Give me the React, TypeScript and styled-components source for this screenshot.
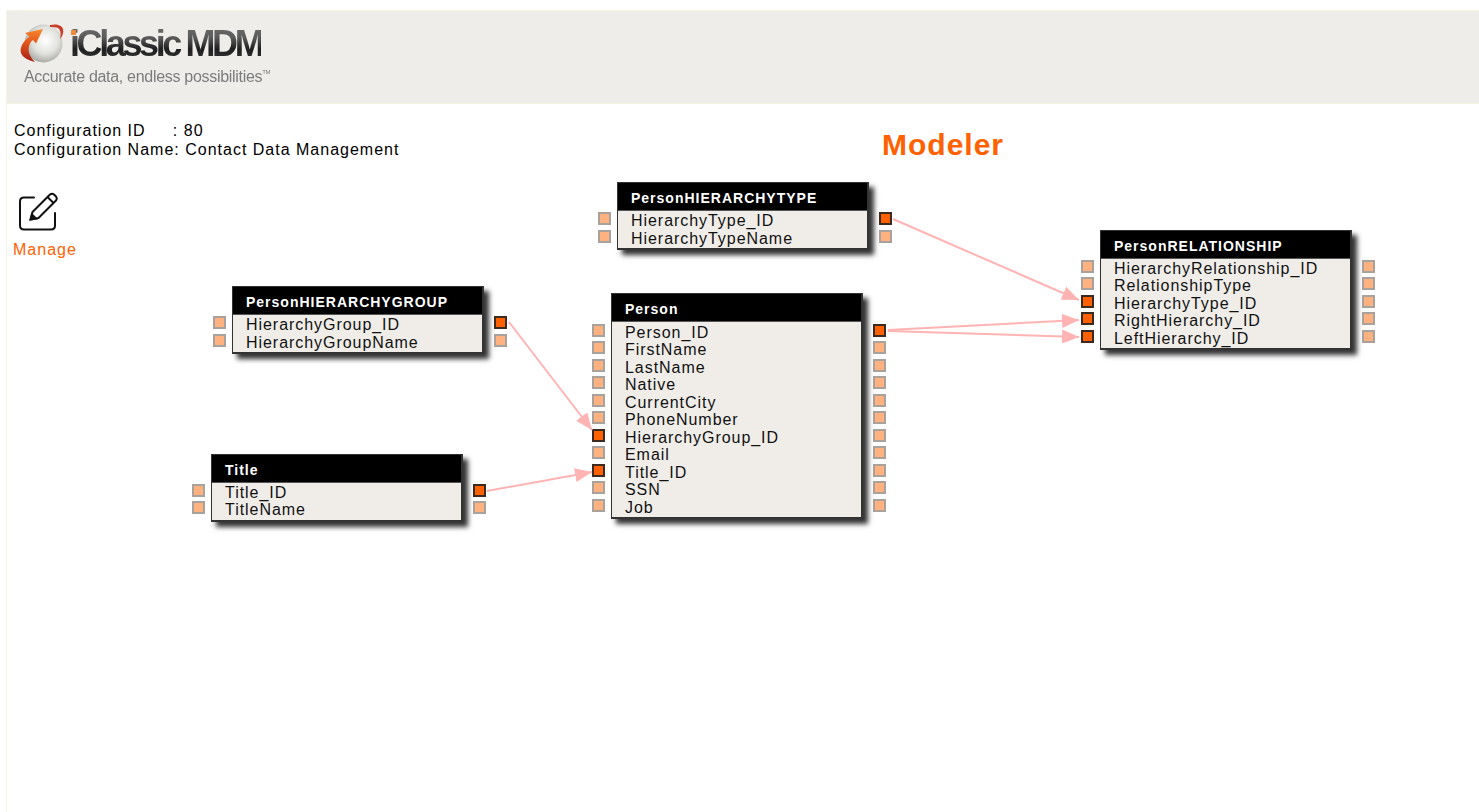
import React from 'react';
import styled, { createGlobalStyle } from 'styled-components';

const GlobalStyle = createGlobalStyle`
  html, body {
    margin: 0;
    padding: 0;
    background: #fff;
    font-family: "Liberation Sans", Arial, sans-serif;
  }
`;

const Page = styled.div`
  position: relative;
  height: 812px;
  padding: 10px 0 0 6px;
  box-sizing: border-box;
  overflow: hidden;
`;

const Shell = styled.div`
  height: 100%;
  display: flex;
  flex-direction: column;
  border-left: 1px solid #f5f5e0;
`;

const Header = styled.div`
  height: 94px;
  box-sizing: border-box;
  flex: none;
  background: #eeede9;
  border-top: 1px solid #f4f4e0;
  border-bottom: 1px solid #f4f4e0;
  padding: 13px 0 0 13px;
`;

const LogoRow = styled.div`
  display: flex;
  align-items: center;
  height: 40px;
  gap: 5px;
  filter: blur(0.35px);
`;

const LogoWrap = styled.div`
  position: relative;
`;

const LogoText = styled.span`
  display: block;
  font-size: 36px;
  line-height: 42px;
  font-weight: 700;
  letter-spacing: -3.4px;
  white-space: pre;
  color: transparent;
  background: linear-gradient(180deg, #707070 0%, #5a5a5a 35%, #1f1f1f 62%, #3c3c3c 100%);
  -webkit-background-clip: text;
  background-clip: text;
`;

const LogoDot = styled.span`
  position: absolute;
  left: 1px;
  top: 7px;
  width: 5px;
  height: 5px;
  background: #f08a3c;
`;

const Tagline = styled.div`
  margin: 2px 0 0 4px;
  font-size: 16px;
  line-height: 22px;
  letter-spacing: -0.3px;
  color: #7c7c7c;
  white-space: nowrap;
  filter: blur(0.3px);

  sup {
    font-size: 6px;
    line-height: 0;
    vertical-align: 8px;
  }
`;

const InfoRow = styled.div`
  display: flex;
  padding: 17px 0 0 7px;
  height: 70px;
  box-sizing: border-box;
  flex: none;
`;

const InfoBlock = styled.div`
  width: 868px;
  flex: none;
  font-size: 16px;
  line-height: 19px;
  letter-spacing: 1px;
  color: #000;
  white-space: pre;
`;

const Title = styled.h1`
  margin: 8px 0 0;
  font-size: 30px;
  line-height: 32px;
  font-weight: 700;
  letter-spacing: 1px;
  color: #ff6100;
`;

const ManageLink = styled.div`
  display: flex;
  flex-direction: column;
  align-items: flex-start;
  padding: 18px 0 0 6px;
  gap: 8px;

  svg {
    margin-left: 6px;
  }
`;

const ManageLabel = styled.span`
  font-size: 16px;
  line-height: 20px;
  letter-spacing: 1px;
  color: #ff6100;
`;

const Canvas = styled.div`
  position: absolute;
  inset: 0;
`;

const Arrows = styled.svg`
  position: absolute;
  left: 0;
  top: 0;
`;

const Node = styled.div<{ $x: number; $y: number }>`
  position: absolute;
  left: ${p => p.$x}px;
  top: ${p => p.$y}px;
  display: flex;
`;

const PortColumn = styled.div<{ $side: 'left' | 'right' }>`
  display: flex;
  flex-direction: column;
  padding-top: 28px;
  margin-left: ${p => (p.$side === 'right' ? '10px' : '0')};
  margin-right: ${p => (p.$side === 'left' ? '6px' : '0')};
`;

const PortCell = styled.div`
  height: 17.5px;
  display: flex;
  align-items: center;
`;

const Port = styled.span<{ $active?: boolean }>`
  display: block;
  width: 13px;
  height: 13px;
  box-sizing: border-box;
  background: ${p => (p.$active ? '#ff6100' : '#ffb27f')};
  border: 2px solid ${p => (p.$active ? '#3a2a20' : '#a9a29c')};
`;

const Table = styled.div`
  width: 252px;
  box-sizing: border-box;
  background: #f0ede9;
  border: 1px solid #333;
  border-bottom-width: 2px;
  border-right-width: 2px;
  box-shadow: 5px 5px 5px #333;
`;

const TableTitle = styled.div`
  height: 27px;
  box-sizing: border-box;
  padding: 0 0 0 13px;
  background: #000;
  color: #fff;
  font-size: 14px;
  line-height: 30px;
  font-weight: 700;
  letter-spacing: 1px;
  white-space: nowrap;
`;

const Fields = styled.div`
  padding: 1.4px 0 1px 13px;
  border-top: 1px solid #555;
`;

const Field = styled.div`
  height: 17.5px;
  font-size: 16px;
  line-height: 18px;
  letter-spacing: 0.95px;
  color: #111;
  white-space: nowrap;
`;

type TableDef = {
  name: string;
  x: number;
  y: number;
  fields: string[];
  activeLeft?: number[];
  activeRight?: number[];
};

const tables: TableDef[] = [
  { name: 'PersonHIERARCHYTYPE', x: 598, y: 182, fields: ['HierarchyType_ID', 'HierarchyTypeName'], activeRight: [0] },
  {
    name: 'PersonRELATIONSHIP',
    x: 1081,
    y: 229.6,
    fields: ['HierarchyRelationship_ID', 'RelationshipType', 'HierarchyType_ID', 'RightHierarchy_ID', 'LeftHierarchy_ID'],
    activeLeft: [2, 3, 4],
  },
  { name: 'PersonHIERARCHYGROUP', x: 213, y: 286, fields: ['HierarchyGroup_ID', 'HierarchyGroupName'], activeRight: [0] },
  {
    name: 'Person',
    x: 592,
    y: 293.4,
    fields: ['Person_ID', 'FirstName', 'LastName', 'Native', 'CurrentCity', 'PhoneNumber', 'HierarchyGroup_ID', 'Email', 'Title_ID', 'SSN', 'Job'],
    activeLeft: [6, 8],
    activeRight: [0],
  },
  { name: 'Title', x: 192, y: 453.6, fields: ['Title_ID', 'TitleName'], activeRight: [0] },
];

const links = [
  { x1: 893, y1: 219, x2: 1079, y2: 300 },
  { x1: 888, y1: 330, x2: 1079, y2: 320 },
  { x1: 888, y1: 331, x2: 1079, y2: 337 },
  { x1: 509, y1: 322, x2: 592, y2: 430 },
  { x1: 487, y1: 491, x2: 592, y2: 472 },
];

const LogoMark = () => (
  <svg width="45" height="40" viewBox="0 0 45 40">
    <defs>
      <radialGradient id="globe" cx="0.55" cy="0.42" r="0.62">
        <stop offset="0" stopColor="#ffffff" />
        <stop offset="0.55" stopColor="#e2e2de" />
        <stop offset="1" stopColor="#a2a29e" />
      </radialGradient>
      <linearGradient id="swoosh" x1="0.5" y1="1" x2="0.6" y2="0">
        <stop offset="0" stopColor="#a61f14" />
        <stop offset="0.55" stopColor="#e2551b" />
        <stop offset="1" stopColor="#f7862a" />
      </linearGradient>
    </defs>
    <circle cx="23.5" cy="19.5" r="19" fill="url(#globe)" />
    <path d="M30 1 C36 -0.5 42 1 43 5 C44 9 42 13 40 15 C41 11 41 6 38 4 C36 3 33 3 30 3 Z" fill="#c8402a" />
    <path d="M23 5 L5 9 L9.5 12.5 C3 17 -0.5 24 1 29 C2.5 33 8 36.5 15 38 C10 33 7.5 28 9 22 C10 19 11 17 13 16 L16 19.5 Z" fill="url(#swoosh)" />
  </svg>
);

const ManageIcon = () => (
  <svg width="40" height="40" viewBox="0 0 40 40" fill="none" stroke="#111" strokeWidth="2">
    <path d="M15 5.5 H5 Q1 5.5 1 9.5 V33.5 Q1 37.5 5 37.5 H32 Q36 37.5 36 33.5 V21" strokeLinecap="round" />
    <path d="M11.5 27.5 L13.5 20 L31 2.5 Q33 1 35 2.5 L37 4.5 Q38.5 6.5 37 8.5 L19.5 26 Z" strokeLinejoin="round" />
    <path d="M28.5 5 L34.5 11" />
    <path d="M11.5 27.5 L13 22.5 L17 26.5 Z" fill="#111" />
  </svg>
);

const App = () => (
  <Page>
    <GlobalStyle />
    <Shell>
      <Header>
        <LogoRow>
          <LogoMark />
          <LogoWrap>
            <LogoText>iClassic MDM</LogoText>
            <LogoDot />
          </LogoWrap>
        </LogoRow>
        <Tagline>
          Accurate data, endless possibilities<sup>TM</sup>
        </Tagline>
      </Header>
      <InfoRow>
        <InfoBlock>
          {'Configuration ID     : 80\nConfiguration Name: Contact Data Management'}
        </InfoBlock>
        <Title>Modeler</Title>
      </InfoRow>
      <ManageLink>
        <ManageIcon />
        <ManageLabel>Manage</ManageLabel>
      </ManageLink>
    </Shell>
    <Canvas>
      {tables.map(t => (
        <Node key={t.name} $x={t.x} $y={t.y}>
          <PortColumn $side="left">
            {t.fields.map((f, i) => (
              <PortCell key={f}>
                <Port $active={t.activeLeft?.includes(i)} />
              </PortCell>
            ))}
          </PortColumn>
          <Table>
            <TableTitle>{t.name}</TableTitle>
            <Fields>
              {t.fields.map(f => (
                <Field key={f}>{f}</Field>
              ))}
            </Fields>
          </Table>
          <PortColumn $side="right">
            {t.fields.map((f, i) => (
              <PortCell key={f}>
                <Port $active={t.activeRight?.includes(i)} />
              </PortCell>
            ))}
          </PortColumn>
        </Node>
      ))}
      <Arrows width="1479" height="812" viewBox="0 0 1479 812">
        <defs>
          <marker id="head" markerUnits="userSpaceOnUse" markerWidth="17" markerHeight="14" refX="17" refY="7" orient="auto">
            <path d="M0 0 L17 7 L0 14 Z" fill="#ffb3b3" />
          </marker>
        </defs>
        {links.map(l => (
          <line
            key={`${l.y1}-${l.y2}`}
            x1={l.x1}
            y1={l.y1}
            x2={l.x2}
            y2={l.y2}
            stroke="#ffb3b3"
            strokeWidth="2"
            markerEnd="url(#head)"
          />
        ))}
      </Arrows>
    </Canvas>
  </Page>
);

export default App;
